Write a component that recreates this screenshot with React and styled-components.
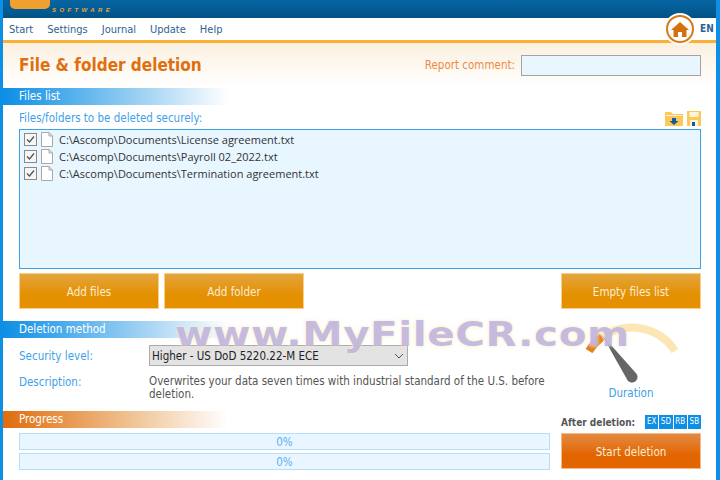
import styled, { createGlobalStyle } from "styled-components";

const GlobalStyle = createGlobalStyle`
  html, body {
    margin: 0;
    padding: 0;
    background: #fff;
  }
  * {
    box-sizing: border-box;
  }
`;

const uiFont = `"DejaVu Sans Condensed", "DejaVu Sans", sans-serif`;

const Window = styled.div`
  position: relative;
  width: 720px;
  height: 480px;
  overflow: hidden;
  display: flex;
  flex-direction: column;
  background: #fff;
  border-left: 3px solid #0d8fe6;
  border-right: 4px solid #0d8fe6;
  font-family: ${uiFont};
  font-size: 11.5px;
`;

const TitleBar = styled.div`
  height: 18px;
  flex: none;
  margin: 0 -4px 0 -3px;
  padding-left: 10px;
  display: flex;
  align-items: flex-end;
  overflow: hidden;
  background: linear-gradient(#0665a2, #025488);
  border-bottom: 1px solid #05507f;
`;

const LogoBlock = styled.div`
  width: 40px;
  height: 9px;
  margin-bottom: 8px;
  border-radius: 0 0 5px 5px;
  background: #f0a02e;
`;

const Brand = styled.div`
  width: 78px;
  flex: none;
  margin: 0 0 3px 2px;
  display: flex;
  flex-direction: column;
`;

const BrandName = styled.span`
  margin-bottom: 6px;
  font: bold 14px/11px "Liberation Sans", sans-serif;
  letter-spacing: 1px;
  color: #6fa3c8;
`;

const Software = styled.span`
  font: italic bold 6px/7px "Liberation Sans", sans-serif;
  letter-spacing: 3.4px;
  color: #e8a63a;
`;

const ProductName = styled.span`
  height: 18px;
  font: bold 14px/1 "Liberation Sans", sans-serif;
  letter-spacing: 1px;
  color: #8fb8d6;
  transform: translateY(-12px);
`;

const MenuBar = styled.nav`
  height: 25px;
  flex: none;
  display: flex;
  gap: 14px;
  padding: 3px 0 0 6px;
  border-bottom: 3px solid #fbb033;
  font-size: 11px;
  line-height: 17px;
  color: #2f6294;
`;

const HomeButton = styled.div`
  position: absolute;
  left: 661px;
  top: 13px;
  width: 32px;
  height: 32px;
  padding: 2px;
  border-radius: 50%;
  background: #fff;
`;

const HomeRing = styled.div`
  width: 28px;
  height: 28px;
  display: flex;
  align-items: center;
  justify-content: center;
  border: 2px solid #d97a14;
  border-radius: 50%;
`;

const Language = styled.span`
  position: absolute;
  left: 697px;
  top: 22px;
  font-size: 10px;
  font-weight: bold;
  line-height: 14px;
  color: #2a6496;
`;

const PageHeader = styled.header`
  height: 45px;
  flex: none;
  display: flex;
  align-items: center;
  justify-content: space-between;
  padding: 0 15px 1px 16px;
  background: linear-gradient(#fbf0e0, #fff);
`;

const PageTitle = styled.h1`
  margin: 0;
  font-size: 17px;
  font-weight: bold;
  color: #e0700f;
`;

const CommentGroup = styled.label`
  display: flex;
  align-items: center;
  gap: 6px;
  color: #ef8a3c;
`;

const CommentInput = styled.input`
  width: 180px;
  height: 21px;
  padding: 0 3px;
  background: #e9f6ff;
  border: 1px solid #a3a3a3;
  border-radius: 0;
  outline: none;
`;

const SectionBar = styled.div`
  width: 225px;
  height: 17px;
  padding-left: 16px;
  line-height: 17px;
  color: #fff;
  background: linear-gradient(
    90deg,
    ${(p) => p.$color},
    ${(p) => p.$fade} 55%,
    rgba(255, 255, 255, 0)
  );
`;

const FilesSection = styled.section`
  flex: none;
  padding-bottom: 12px;
`;

const FilesBody = styled.div`
  padding: 0 15px 0 16px;
`;

const ListHeader = styled.div`
  height: 24px;
  display: flex;
  align-items: center;
  justify-content: space-between;
  padding-top: 2px;
  color: #3f9fe8;
`;

const ListTools = styled.div`
  display: flex;
  align-items: center;
  gap: 4px;
`;

const FileList = styled.div`
  height: 140px;
  padding: 1px 0 0 4px;
  background: #e8f6ff;
  border: 1px solid #3ba0e6;
`;

const FileRow = styled.div`
  height: 17px;
  display: flex;
  align-items: center;
  gap: 4px;
  font-family: "Open Sans", sans-serif;
  font-size: 11px;
  color: #333;
`;

const CheckBox = styled.span`
  width: 13px;
  height: 13px;
  flex: none;
  display: flex;
  align-items: center;
  justify-content: center;
  background: #f6f6f6;
  border: 1px solid #8a8a8a;
`;

const FileIcon = styled.svg`
  flex: none;
  margin-right: 2px;
`;

const ButtonRow = styled.div`
  display: flex;
  gap: 5px;
  margin-top: 4px;
`;

const ActionButton = styled.button`
  width: 140px;
  height: 36px;
  margin-left: ${(p) => (p.$pushed ? "auto" : "0")};
  padding: 2px 0 0;
  font-family: ${uiFont};
  font-size: 11.5px;
  color: #fdecd2;
  border: 1px solid ${(p) => p.$edge};
  border-radius: 0;
  background: linear-gradient(${(p) => p.$top}, ${(p) => p.$bottom} 62%);
`;

const MethodSection = styled.section`
  height: 90px;
  flex: none;
  display: flex;
`;

const MethodMain = styled.div`
  width: 543px;
  flex: none;
`;

const FormGrid = styled.div`
  display: grid;
  grid-template-columns: 130px 1fr;
  row-gap: 5px;
  padding: 7px 0 0 16px;
  color: #3f9fe8;
`;

const FormLabel = styled.span`
  padding-top: ${(p) => p.$drop || 0}px;
  line-height: 21px;
`;

const SelectWrap = styled.div`
  position: relative;
  width: 259px;
  height: 21px;
`;

const LevelSelect = styled.select`
  width: 100%;
  height: 100%;
  padding: 0 0 0 2px;
  appearance: none;
  font-family: ${uiFont};
  font-size: 11.5px;
  color: #222;
  background: #e3e3e3;
  border: 1px solid #aaa;
  border-radius: 0;
  outline: none;
`;

const SelectArrow = styled.svg`
  position: absolute;
  right: 4px;
  top: 8px;
  pointer-events: none;
`;

const Description = styled.p`
  width: 405px;
  margin: 3px 0 0;
  line-height: 13px;
  color: #555;
`;

const GaugeColumn = styled.div`
  flex: 1;
  display: flex;
  flex-direction: column;
  align-items: center;
  padding-top: 1px;
`;

const GaugeLabel = styled.span`
  margin-top: 2px;
  line-height: 14px;
  color: #3f9fe8;
`;

const ProgressSection = styled.section`
  flex: 1;
  display: flex;
  justify-content: space-between;
  padding-right: 15px;
`;

const ProgressMain = styled.div`
  width: 547px;
`;

const ProgressBars = styled.div`
  display: flex;
  flex-direction: column;
  gap: 3px;
  margin-top: 5px;
  padding-left: 16px;
`;

const ProgressBar = styled.div`
  height: 17px;
  line-height: 16px;
  text-align: center;
  color: #5aaef0;
  background: #e9f6ff;
  border: 1px solid #b5defb;
`;

const RunColumn = styled.div`
  width: 140px;
`;

const AfterRow = styled.div`
  height: 22px;
  display: flex;
  align-items: center;
  justify-content: space-between;
  font-size: 10px;
  font-weight: bold;
  color: #555;
`;

const Badges = styled.div`
  display: flex;
  gap: 1px;
`;

const Badge = styled.span`
  width: 13.25px;
  height: 14px;
  font-size: 8px;
  font-weight: normal;
  line-height: 14px;
  text-align: center;
  color: #fff;
  background: #0d8fe6;
`;

const Watermark = styled.div`
  position: absolute;
  left: 172px;
  top: 315px;
  font-family: "DejaVu Sans", sans-serif;
  font-size: 34px;
  font-weight: bold;
  line-height: 38px;
  letter-spacing: 0.5px;
  white-space: nowrap;
  pointer-events: none;
  transform: scaleX(1.19);
  transform-origin: left center;
  color: rgba(170, 166, 232, 0.7);
  text-shadow: 0 0 2px rgba(253, 232, 190, 0.7), 0 0 4px rgba(253, 232, 190, 0.7);
`;

const menuItems = ["Start", "Settings", "Journal", "Update", "Help"];

const files = [
  "C:\\Ascomp\\Documents\\License agreement.txt",
  "C:\\Ascomp\\Documents\\Payroll 02_2022.txt",
  "C:\\Ascomp\\Documents\\Termination agreement.txt",
];

const HomeGlyph = () => (
  <svg width="18" height="17" viewBox="0 0 18 17">
    <path d="M9 1 L18 9 L15.5 9 L15.5 16 L11 16 L11 11 L7 11 L7 16 L2.5 16 L2.5 9 L0 9 Z" fill="#d4710f" />
  </svg>
);

const FolderGlyph = () => (
  <svg width="18" height="15" viewBox="0 0 18 15">
    <path d="M0 1 H6 L8 3 H18 V15 H0 Z" fill="#fdc75a" />
    <rect x="1" y="4" width="16" height="1" fill="#fff3d6" />
    <path d="M7 7 H11 V10 H13.5 L9 14 L4.5 10 H7 Z" fill="#0f5e9c" />
  </svg>
);

const SaveGlyph = () => (
  <svg width="14" height="15" viewBox="0 0 14 15">
    <rect width="14" height="15" fill="#fdc75a" />
    <rect x="2.5" y="1" width="9" height="5" fill="#fff3d6" />
    <rect x="3" y="9" width="8" height="6" fill="#fff3d6" />
    <rect x="5" y="11" width="3" height="4" fill="#0f5e9c" />
  </svg>
);

const CheckGlyph = () => (
  <svg width="11" height="11" viewBox="0 0 11 11">
    <path d="M2 5.5 L4.5 8 L9 2.5" fill="none" stroke="#555" strokeWidth="1.3" />
  </svg>
);

const PageGlyph = () => (
  <FileIcon width="12" height="15" viewBox="0 0 12 15">
    <path d="M.5 .5 H8 L11.5 4 V14.5 H.5 Z M8 .5 V4 H11.5" fill="#fff" stroke="#a8a8a8" />
  </FileIcon>
);

const Gauge = () => (
  <svg width="106" height="62" viewBox="0 0 106 62">
    <path d="M11 29 A51 51 0 0 1 97 29" fill="none" stroke="#fde6b5" strokeWidth="8" />
    <path d="M11 29 A51 51 0 0 1 24 15" fill="none" stroke="#e4811f" strokeWidth="8" />
    <path d="M24 13 L58.5 51.8 A5.5 5.5 0 0 1 49.5 58.2 Z" fill="#666" />
  </svg>
);

export default function App() {
  return (
    <Window>
      <GlobalStyle />
      <TitleBar>
        <LogoBlock />
        <Brand>
          <BrandName>ASCOMP</BrandName>
          <Software>SOFTWARE</Software>
        </Brand>
        <ProductName>SECURE ERASER</ProductName>
      </TitleBar>

      <MenuBar>
        {menuItems.map((item) => (
          <span key={item}>{item}</span>
        ))}
      </MenuBar>
      <HomeButton>
        <HomeRing>
          <HomeGlyph />
        </HomeRing>
      </HomeButton>
      <Language>EN</Language>

      <PageHeader>
        <PageTitle>File &amp; folder deletion</PageTitle>
        <CommentGroup>
          Report comment:
          <CommentInput />
        </CommentGroup>
      </PageHeader>

      <FilesSection>
        <SectionBar $color="#0d8fe6" $fade="#8fcaf1">Files list</SectionBar>
        <FilesBody>
          <ListHeader>
            Files/folders to be deleted securely:
            <ListTools>
              <FolderGlyph />
              <SaveGlyph />
            </ListTools>
          </ListHeader>
          <FileList>
            {files.map((file) => (
              <FileRow key={file}>
                <CheckBox>
                  <CheckGlyph />
                </CheckBox>
                <PageGlyph />
                {file}
              </FileRow>
            ))}
          </FileList>
          <ButtonRow>
            <ActionButton $top="#e3a53e" $bottom="#e49000" $edge="#fbcf8a">Add files</ActionButton>
            <ActionButton $top="#e3a53e" $bottom="#e49000" $edge="#fbcf8a">Add folder</ActionButton>
            <ActionButton $pushed $top="#e3a53e" $bottom="#e49000" $edge="#fbcf8a">Empty files list</ActionButton>
          </ButtonRow>
        </FilesBody>
      </FilesSection>

      <MethodSection>
        <MethodMain>
          <SectionBar $color="#0d8fe6" $fade="#8fcaf1">Deletion method</SectionBar>
          <FormGrid>
            <FormLabel $drop={1}>Security level:</FormLabel>
            <SelectWrap>
              <LevelSelect defaultValue="higher">
                <option value="higher">Higher - US DoD 5220.22-M ECE</option>
              </LevelSelect>
              <SelectArrow width="10" height="6" viewBox="0 0 10 6">
                <path d="M1 1 L5 5 L9 1" fill="none" stroke="#555" strokeWidth="1" />
              </SelectArrow>
            </SelectWrap>
            <FormLabel>Description:</FormLabel>
            <Description>
              Overwrites your data seven times with industrial standard of the U.S. before deletion.
            </Description>
          </FormGrid>
        </MethodMain>
        <GaugeColumn>
          <Gauge />
          <GaugeLabel>Duration</GaugeLabel>
        </GaugeColumn>
      </MethodSection>

      <ProgressSection>
        <ProgressMain>
          <SectionBar $color="#e06c0c" $fade="#efc08f">Progress</SectionBar>
          <ProgressBars>
            <ProgressBar>0%</ProgressBar>
            <ProgressBar>0%</ProgressBar>
          </ProgressBars>
        </ProgressMain>
        <RunColumn>
          <AfterRow>
            After deletion:
            <Badges>
              {["EX", "SD", "RB", "SB"].map((badge) => (
                <Badge key={badge}>{badge}</Badge>
              ))}
            </Badges>
          </AfterRow>
          <ActionButton $top="#e38a42" $bottom="#e36500" $edge="#f5b98a">Start deletion</ActionButton>
        </RunColumn>
      </ProgressSection>

      <Watermark>www.MyFileCR.com</Watermark>
    </Window>
  );
}
